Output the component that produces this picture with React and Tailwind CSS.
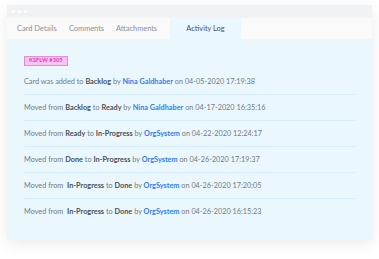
import React from 'react'

const rows = [
  { parts: ['Card was added to ', ['Backlog'], ' by '], who: 'Nina Galdhaber', when: '04-05-2020 17:19:38' },
  { parts: ['Moved from ', ['Backlog'], ' to ', ['Ready'], ' by '], who: 'Nina Galdhaber', when: '04-17-2020 16:35:16' },
  { parts: ['Moved from ', ['Ready'], ' to ', ['In-Progress'], ' by '], who: 'OrgSystem', when: '04-22-2020 12:24:17' },
  { parts: ['Moved from ', ['Done'], ' to ', ['In-Progress'], ' by '], who: 'OrgSystem', when: '04-26-2020 17:19:37' },
  { parts: ['Moved from \u00a0', ['In-Progress'], ' to ', ['Done'], ' by '], who: 'OrgSystem', when: '04-26-2020 17:20:05' },
  { parts: ['Moved from \u00a0', ['In-Progress'], ' to ', ['Done'], ' by '], who: 'OrgSystem', when: '04-26-2020 16:15:23' },
]

function LogRow({ row, last }) {
  return (
    <div className={`h-[26px] flex items-center ${last ? '' : 'border-b border-[#d5eef9]'}`}>
      <p className="text-[7.3px] leading-none text-[#737880] whitespace-nowrap">
        {row.parts.map((p, i) =>
          Array.isArray(p) ? (
            <span key={i} className="font-bold text-[#4a4f57]">{p[0]}</span>
          ) : (
            <span key={i}>{p}</span>
          )
        )}
        <span className="font-bold text-[#2f7fe6]">{row.who}</span>
        {' on '}
        {row.when}
      </p>
    </div>
  )
}

export default function App() {
  return (
    <div className="w-[379px] h-[259px] bg-white pt-[5px] pl-[7px]" style={{ fontFamily: 'Lato, "Noto Sans", sans-serif' }}>
      <div className="w-[365px] shadow-[0_4px_14px_rgba(0,0,0,0.08)]">
        {/* Window bar */}
        <div className="h-[13px] bg-[#f1f2f4] flex items-center gap-[3px] pl-[5px]">
          <span className="w-[3px] h-[3px] rounded-full bg-white" />
          <span className="w-[3px] h-[3px] rounded-full bg-white" />
          <span className="w-[3px] h-[3px] rounded-full bg-white" />
        </div>

        {/* Tabs */}
        <div className="h-[21px] bg-[#fafafa] flex items-stretch pl-[10px] text-[7.4px] text-[#8b9097]">
          <div className="w-[52px] flex items-center">Card Details</div>
          <div className="w-[47px] flex items-center">Comments</div>
          <div className="w-[54px] flex items-center">Attachments</div>
          <div className="w-[71px] flex items-center justify-center bg-[#eaf8fe] text-[#4a4f57]">Activity Log</div>
        </div>

        {/* Activity log */}
        <div className="bg-[#eaf8fe] px-[17px] pt-[17px] pb-[15px]">
          <div className="flex">
            <span className="flex items-center h-[10px] px-[4px] bg-[#f7c6ef] border border-[#ea8ad9] text-[5.5px] leading-none font-bold text-[#d63cbf] tracking-wide">
              KSFLW #305
            </span>
          </div>
          <div className="mt-[3px]">
            {rows.map((r, i) => (
              <LogRow key={i} row={r} last={i === rows.length - 1} />
            ))}
          </div>
        </div>
      </div>
    </div>
  )
}
